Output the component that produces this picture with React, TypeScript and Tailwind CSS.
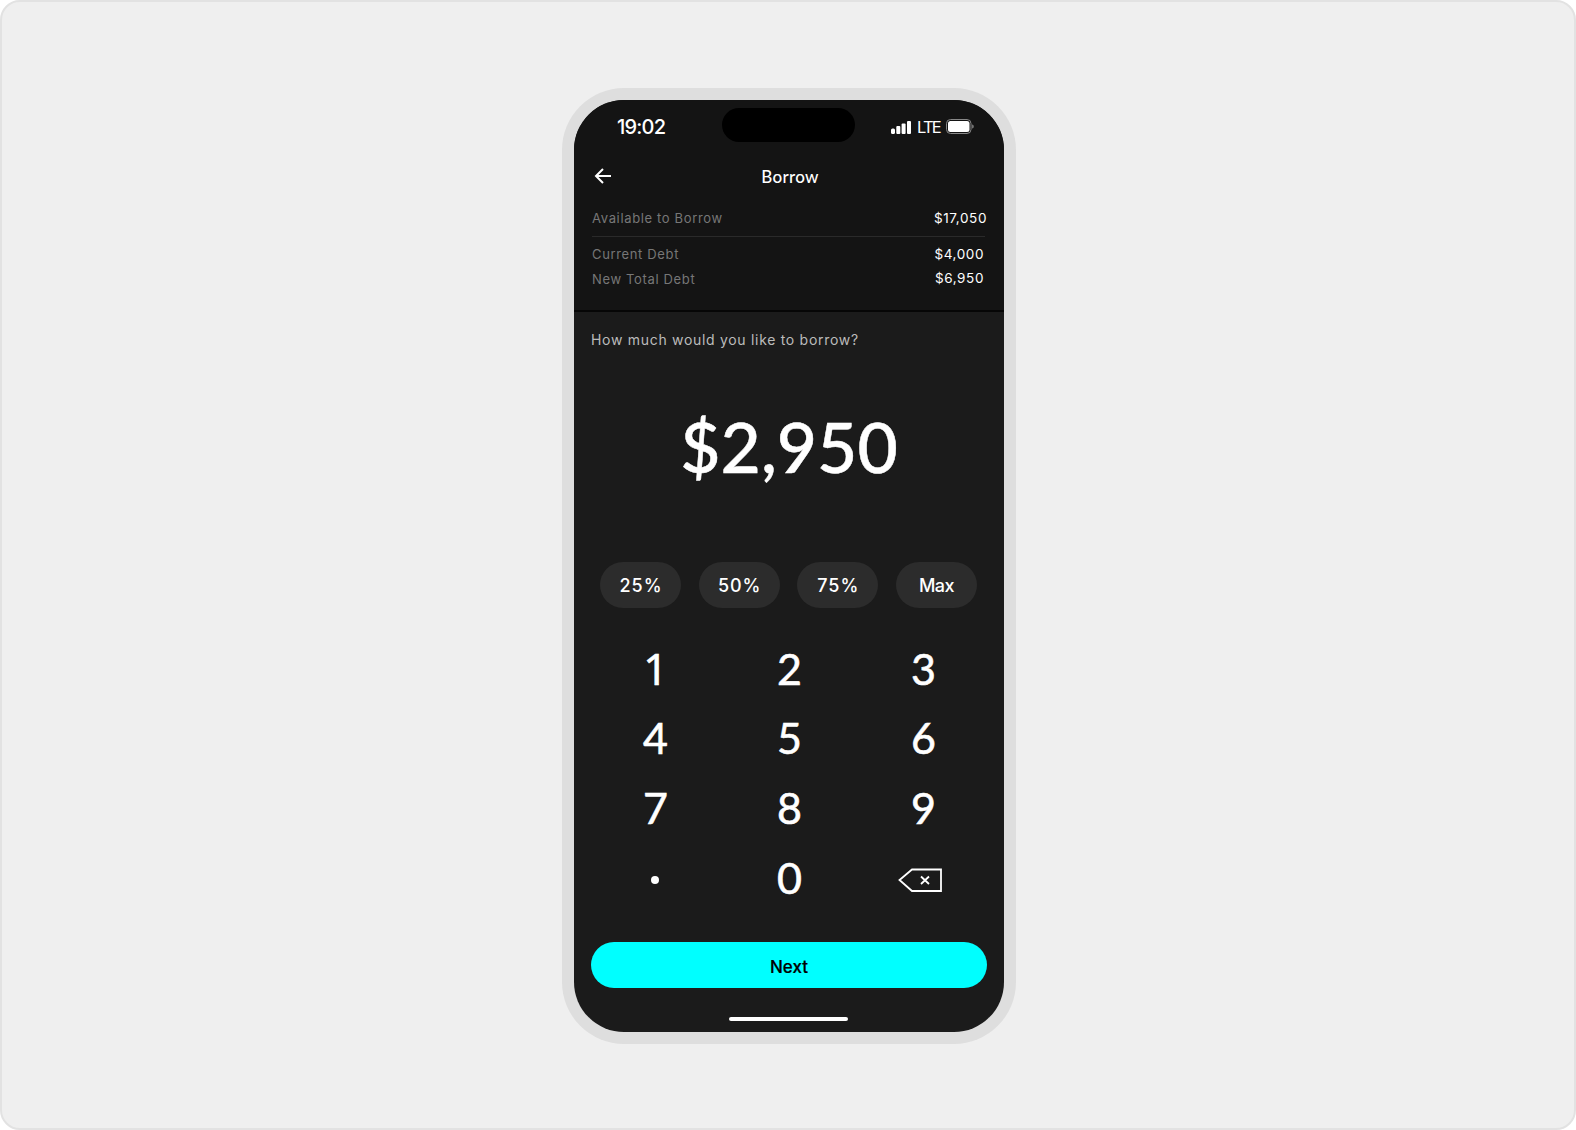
const lato = "font-['Lato',sans-serif]";
const inter = "font-['Inter',sans-serif]";

function BackspaceIcon() {
  return (
    <svg width="45" height="26" viewBox="0 0 45 26" fill="none" stroke="white" aria-hidden="true">
      <path d="M14 2.5H43V24H14L1.5 13Z" strokeWidth="1.8" />
      <path d="M23 9.5L31 17M31 9.5L23 17" strokeWidth="1.8" />
    </svg>
  );
}

function StatusIcons() {
  return (
    <div className="flex items-center">
      <svg width="20" height="13" viewBox="0 0 20 13" fill="white" aria-hidden="true">
        <rect x="0" y="7.5" width="4" height="5.5" rx="1.5" />
        <rect x="5.3" y="5" width="4" height="8" rx="1" />
        <rect x="10.6" y="2.5" width="4" height="10.5" rx="1" />
        <rect x="16" y="0" width="4" height="13" rx="1" />
      </svg>
      <span className={`ml-[6px] w-[23px] text-[16.5px] leading-none tracking-[-1.8px] text-white ${inter}`}>LTE</span>
      <svg className="ml-[6px] -translate-y-[1px]" width="28" height="15" viewBox="0 0 28 15" fill="none" aria-hidden="true">
        <rect x="0.5" y="0.5" width="24.5" height="14" rx="4" stroke="#888" />
        <rect x="2" y="2" width="21.5" height="11" rx="2.5" fill="white" />
        <path d="M26.2 5.5C27.2 5.8 27.7 6.5 27.7 7.5C27.7 8.5 27.2 9.2 26.2 9.5Z" fill="#888" />
      </svg>
    </div>
  );
}

function StatRow({
  label,
  value,
  className,
  valueClassName,
}: {
  label: string;
  value: string;
  className?: string;
  valueClassName?: string;
}) {
  return (
    <div className={`flex items-center justify-between leading-5 ${inter} ${className ?? ""}`}>
      <span className="text-[13px] tracking-[0.65px] text-[#777777]">{label}</span>
      <span className={`text-[13.5px] tracking-[0.6px] text-white ${valueClassName ?? ""}`}>{value}</span>
    </div>
  );
}

const keys = ["1", "2", "3", "4", "5", "6", "7", "8", "9"];

export default function App() {
  return (
    <div className="flex h-[1130px] w-full justify-center rounded-[20px] border-2 border-[#e2e2e2] bg-[#efefef] pl-[2px] pt-[86px]">
      <div className="h-[956px] w-[454px] rounded-[62px] bg-[#dedede] p-[12px]">
        <div className="flex h-[932px] w-[430px] flex-col overflow-hidden rounded-[50px] bg-[#1b1b1b]">
          <div className="relative h-[212px] border-b-2 border-[#060606] bg-[#141414]">
            <div className="absolute left-[148px] top-[8px] h-[34px] w-[133px] rounded-[17px] bg-black" />
            <div className="flex h-[55px] items-start justify-between pl-[43px] pr-[30px]">
              <span className={`mt-[15px] text-[20px] font-medium leading-6 tracking-[-0.8px] text-white ${inter}`}>19:02</span>
              <div className="mt-[19px]">
                <StatusIcons />
              </div>
            </div>
            <div className={`relative flex h-[45px] items-center justify-center pb-[1px] pl-[2px] text-[17px] font-medium tracking-[0.3px] text-white ${lato}`}>
              <svg className="absolute left-[20px] top-[12px]" width="18" height="18" viewBox="0 0 18 18" fill="none" stroke="white" strokeWidth="2" aria-hidden="true">
                <path d="M17 9H2M9 2L2 9L9 16" />
              </svg>
              Borrow
            </div>
            <div className="pl-[18px] pr-[17px] pt-[8px]">
              <StatRow label="Available to Borrow" value="$17,050" />
              <div className="mb-[7px] mr-[2px] mt-[8px] h-px bg-[#2a2a2a]" />
              <StatRow label="Current Debt" value="$4,000" className="pr-[3px]" />
              <StatRow label="New Total Debt" value="$6,950" className="mt-[5px] pr-[3px]" valueClassName="-translate-y-[1px]" />
            </div>
          </div>
          <div className="flex flex-1 flex-col px-[17px]">
            <p className={`mt-[18px] text-[14px] leading-5 tracking-[0.7px] text-[#bbbbbb] ${inter}`}>How much would you like to borrow?</p>
            <div className={`mt-[56px] text-center text-[69.5px] font-medium leading-[80px] text-white [-webkit-text-stroke:0.5px_white] ${lato}`}>$2,950</div>
            <div className="ml-[9px] mr-[10px] mt-[76px] grid grid-cols-4 gap-[17.5px]">
              {["25%", "50%", "75%", "Max"].map((p) => (
                <div
                  key={p}
                  className={`flex h-[46px] items-center justify-center rounded-[23px] bg-[#2c2c2c] text-[18px] font-medium text-white ${p === "Max" ? "tracking-[-0.6px]" : "pl-[1px] tracking-[1px]"} ${inter}`}
                >
                  {p}
                </div>
              ))}
            </div>
            <div className={`ml-[-2.5px] mr-[-3.5px] mt-[26px] grid grid-cols-3 text-[43px] text-white [-webkit-text-stroke:0.6px_white] ${lato}`}>
              {keys.map((k) => (
                <div key={k} className={`flex h-[69.7px] items-center justify-center ${k === "1" ? "font-['Noto_Sans',sans-serif]" : ""}`}>{k}</div>
              ))}
              <div className="flex h-[69.7px] items-center justify-center pr-[1px] pt-[4px]">
                <div className="h-[8px] w-[8px] rounded-full bg-white" />
              </div>
              <div className="flex h-[69.7px] items-center justify-center">0</div>
              <div className="flex h-[69.7px] items-center justify-center pr-[6px] pt-[4px]">
                <BackspaceIcon />
              </div>
            </div>
            <div className={`mt-[29px] flex h-[46px] items-center justify-center rounded-[23px] bg-[#00ffff] pt-[5px] text-[17px] font-medium text-black [-webkit-text-stroke:0.2px_black] ${inter}`}>
              Next
            </div>
            <div className="ml-[137.5px] mt-[29px] h-[4px] w-[119px] rounded-full bg-white" />
          </div>
        </div>
      </div>
    </div>
  );
}
